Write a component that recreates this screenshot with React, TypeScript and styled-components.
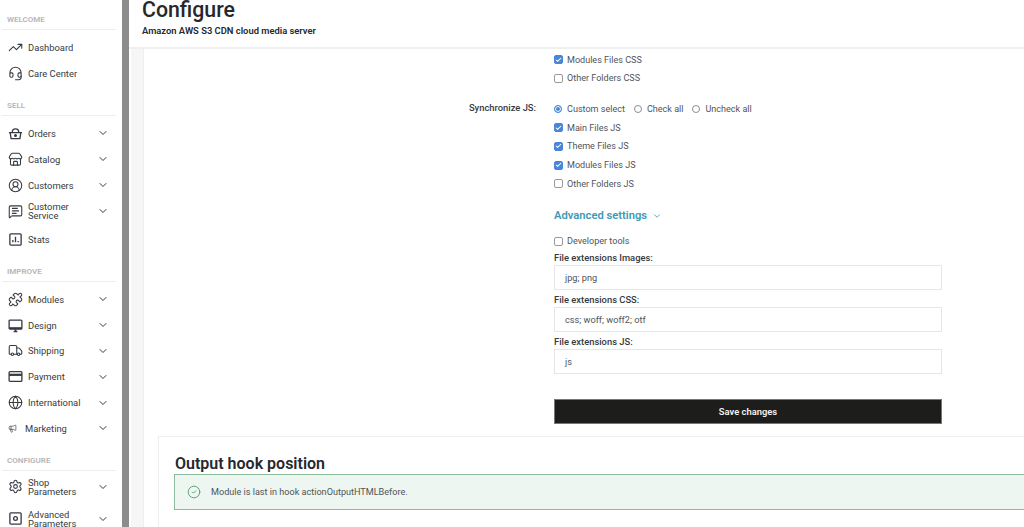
import React from 'react'
import styled, { createGlobalStyle } from 'styled-components'
import {
  TrendingUp, Headset, Store, CircleUserRound, MessageSquareText,
  Puzzle, Truck, Globe, Megaphone, Settings, ChevronDown, CircleCheck, Check,
} from 'lucide-react'

const FONT = `Roboto, "Liberation Sans", sans-serif`

const GlobalStyle = createGlobalStyle`
  html, body {
    margin: 0;
    height: 527px;
    overflow: hidden;
    background: #fff;
    font-family: ${FONT};
    color: #363a41;
  }
`

const Page = styled.div`
  display: flex;
  width: 1024px;
  height: 527px;
  overflow: hidden;
`

const Sidebar = styled.nav`
  flex: 0 0 122px;
  box-sizing: border-box;
  padding: 13px 6px 0 2px;
  overflow: hidden;
`

const SectionTitle = styled.div<{ $gap: number }>`
  margin-top: ${p => p.$gap}px;
  height: 16px;
  padding-left: 5px;
  line-height: 13px;
  font-size: 8px;
  font-weight: 600;
  color: #b4b6b8;
  border-bottom: 1px solid #eeeeee;
`

const NavList = styled.div<{ $pad: number }>`
  display: flex;
  flex-direction: column;
  padding-top: ${p => p.$pad}px;
`

const NavRow = styled.div<{ $height: number }>`
  display: flex;
  align-items: center;
  height: ${p => p.$height}px;
  padding-left: 6px;
  color: #363a41;
  svg { flex: none; }
`

const NavLabel = styled.span<{ $small?: boolean }>`
  flex: 1;
  margin-left: ${p => (p.$small ? 8 : 5)}px;
  font-size: 9.4px;
  line-height: 9px;
`

const Chevron = styled(ChevronDown)`
  margin-right: 7px;
`

const Divider = styled.div`
  flex: 0 0 7px;
  background: #8c8c8c;
`

const Main = styled.main`
  flex: 1;
  min-width: 0;
  display: flex;
  flex-direction: column;
`

const Header = styled.header`
  flex: 0 0 49px;
  box-sizing: border-box;
  padding-left: 13px;
  border-bottom: 2px solid #efefef;
`

const Title = styled.h1`
  margin: 0;
  font-size: 21.3px;
  line-height: 20px;
  font-weight: 500;
  color: #25282c;
`

const Subtitle = styled.div`
  margin-top: 5px;
  font-size: 9.4px;
  line-height: 12px;
  font-weight: 600;
  color: #25282c;
`

const Body = styled.div`
  flex: 1;
  display: flex;
  min-height: 0;
  padding-left: 2px;
`

const Gutter = styled.div`
  flex: 0 0 12px;
  background: #f6f6f6;
`

const Panel = styled.section`
  flex: 1;
  min-width: 0;
  border-left: 1px solid #eeeeee;
  padding-top: 1.4px;
`

const FormRow = styled.div<{ $gap?: number }>`
  display: grid;
  grid-template-columns: 392px 388px;
  column-gap: 18px;
  margin-top: ${p => p.$gap ?? 0}px;
`

const RowLabel = styled.div`
  text-align: right;
  font-size: 9.4px;
  line-height: 15px;
  font-weight: 500;
  color: #363a41;
`

const Controls = styled.div`
  display: flex;
  flex-direction: column;
`

const Option = styled.label`
  display: flex;
  align-items: center;
  height: 18.7px;
  font-size: 9.05px;
  color: #50545a;
`

const Box = styled.span<{ $on?: boolean }>`
  display: flex;
  align-items: center;
  justify-content: center;
  box-sizing: border-box;
  width: 9px;
  height: 9px;
  margin-right: 4px;
  border-radius: 2px;
  border: 1px solid ${p => (p.$on ? '#4a86d8' : '#9a9a9a')};
  background: ${p => (p.$on ? '#4a86d8' : '#fff')};
  color: #fff;
`

const RadioRow = styled.div`
  display: flex;
  align-items: center;
  height: 18.7px;
  gap: 9px;
`

const RadioItem = styled.label`
  display: flex;
  align-items: center;
  font-size: 9.05px;
  color: #50545a;
`

const Radio = styled.span<{ $on?: boolean }>`
  box-sizing: border-box;
  width: 8px;
  height: 8px;
  margin-right: 5px;
  border-radius: 50%;
  border: 1px solid ${p => (p.$on ? '#4a86d8' : '#8d8d8d')};
  background: ${p => (p.$on ? '#4a86d8' : '#fff')};
  box-shadow: ${p => (p.$on ? 'inset 0 0 0 1px #fff' : 'none')};
`

const AdvancedLink = styled.div`
  display: flex;
  align-items: center;
  gap: 5px;
  margin: 14.6px 0 8px;
  height: 16px;
  font-size: 11.2px;
  font-weight: 600;
  color: #3d9ab5;
`

const FieldLabel = styled.div<{ $gap?: number }>`
  font-size: 9.4px;
  line-height: 12px;
  font-weight: 500;
  color: #363a41;
  margin-top: ${p => p.$gap ?? 0}px;
`

const TextField = styled.div`
  box-sizing: border-box;
  height: 25px;
  margin: 1px 0 4px;
  padding-left: 10px;
  border: 1px solid #e6e6e6;
  font-size: 9.2px;
  line-height: 23px;
  color: #50545a;
`

const SaveButton = styled.button`
  box-sizing: border-box;
  width: 100%;
  height: 25px;
  margin-top: 21px;
  border: 1px solid #777;
  background: #1d1d1b;
  color: #f2f2f2;
  font-family: ${FONT};
  font-size: 9.4px;
  font-weight: 600;
`

const Card = styled.section`
  margin: 12px 0 0 14px;
  padding: 16px 0 0 15px;
  border: 1px solid #eeeeee;
  border-right: 0;
  height: 200px;
`

const CardTitle = styled.h2`
  margin: 0;
  padding-left: 1px;
  font-size: 16px;
  line-height: 21px;
  font-weight: 600;
  color: #25282c;
`

const Alert = styled.div`
  box-sizing: border-box;
  display: flex;
  align-items: center;
  gap: 10px;
  height: 36px;
  padding-left: 12px;
  background: #edf6f0;
  border: 1px solid #8bbd9c;
  border-right: 0;
  font-size: 9.1px;
  color: #50545a;
  svg { color: #4f9b6b; flex: none; }
`

type IconProps = { size?: number; strokeWidth?: number }

// icons lucide has no close match for
const BasketIcon = ({ size = 15 }: IconProps) => (
  <svg width={size} height={size} viewBox="0 0 16 16" fill="none" stroke="currentColor" strokeWidth="1.4">
    <path d="M1 7h14M2.3 7l1 6.5h9.4l1-6.5" />
    <path d="M4.5 7c0-2.5 1.5-4 3.5-4s3.5 1.5 3.5 4" />
    <circle cx="8" cy="10.2" r="0.9" fill="currentColor" />
  </svg>
)

const StatsIcon = ({ size = 15 }: IconProps) => (
  <svg width={size} height={size} viewBox="0 0 16 16" fill="none" stroke="currentColor" strokeWidth="1.4">
    <rect x="2" y="2" width="12" height="12" rx="1" />
    <path d="M5.2 11V8.5M8 11V5M10.8 11V9.5" />
  </svg>
)

const ScreenIcon = ({ size = 15 }: IconProps) => (
  <svg width={size} height={size} viewBox="0 0 16 16" fill="none" stroke="currentColor" strokeWidth="1.4">
    <rect x="1.2" y="2.2" width="13.6" height="9.6" rx="1" />
    <path d="M1.2 10.8h13.6" strokeWidth="2" />
    <path d="M8 12v2.5M6 14.5h4" strokeWidth="1.6" />
  </svg>
)

const CardIcon = ({ size = 15 }: IconProps) => (
  <svg width={size} height={size} viewBox="0 0 16 16" fill="none" stroke="currentColor" strokeWidth="1.4">
    <rect x="1.2" y="2.8" width="13.6" height="10.4" rx="1" />
    <path d="M1.2 6.2h13.6" strokeWidth="2.4" />
  </svg>
)

const ChipIcon = ({ size = 15 }: IconProps) => (
  <svg width={size} height={size} viewBox="0 0 16 16" fill="none" stroke="currentColor" strokeWidth="1.4">
    <rect x="2" y="2" width="12" height="12" rx="1" />
    <circle cx="8" cy="8" r="2" />
  </svg>
)

const NAV = [
  {
    title: 'WELCOME', gap: 0, pad: 4, items: [
      { label: 'Dashboard', icon: TrendingUp, h: 26 },
      { label: 'Care Center', icon: Headset, h: 26 },
    ],
  },
  {
    title: 'SELL', gap: 13, pad: 4, items: [
      { label: 'Orders', icon: BasketIcon, h: 26, more: true },
      { label: 'Catalog', icon: Store, h: 26, more: true },
      { label: 'Customers', icon: CircleUserRound, h: 26, more: true },
      { label: 'Customer Service', icon: MessageSquareText, h: 26, more: true },
      { label: 'Stats', icon: StatsIcon, h: 30 },
    ],
  },
  {
    title: 'IMPROVE', gap: 10.5, pad: 5, items: [
      { label: 'Modules', icon: Puzzle, h: 25.8, more: true },
      { label: 'Design', icon: ScreenIcon, h: 25.8, more: true },
      { label: 'Shipping', icon: Truck, h: 25.8, more: true },
      { label: 'Payment', icon: CardIcon, h: 25.8, more: true },
      { label: 'International', icon: Globe, h: 25.8, more: true },
      { label: 'Marketing', icon: Megaphone, h: 25.8, more: true, small: true },
    ],
  },
  {
    title: 'CONFIGURE', gap: 12.6, pad: 1, items: [
      { label: 'Shop Parameters', icon: Settings, h: 30, more: true },
      { label: 'Advanced Parameters', icon: ChipIcon, h: 34, more: true },
    ],
  },
]

const CheckOption = ({ label, on }: { label: string; on?: boolean }) => (
  <Option>
    <Box $on={on}>{on && <Check size={8} strokeWidth={3.5} />}</Box>
    {label}
  </Option>
)

export default function App() {
  return (
    <Page>
      <GlobalStyle />
      <Sidebar>
        {NAV.map(section => (
          <div key={section.title}>
            <SectionTitle $gap={section.gap}>{section.title}</SectionTitle>
            <NavList $pad={section.pad}>
              {section.items.map((item: any) => {
                const Icon = item.icon
                return (
                  <NavRow key={item.label} $height={item.h}>
                    <Icon size={item.small ? 9 : 15} strokeWidth={1.7} />
                    <NavLabel $small={item.small}>{item.label}</NavLabel>
                    {item.more && <Chevron size={12} strokeWidth={2} />}
                  </NavRow>
                )
              })}
            </NavList>
          </div>
        ))}
      </Sidebar>
      <Divider />
      <Main>
        <Header>
          <Title>Configure</Title>
          <Subtitle>Amazon AWS S3 CDN cloud media server</Subtitle>
        </Header>
        <Body>
          <Gutter />
          <Panel>
            <FormRow>
              <div />
              <Controls>
                <CheckOption label="Modules Files CSS" on />
                <CheckOption label="Other Folders CSS" />
              </Controls>
            </FormRow>
            <FormRow $gap={12}>
              <RowLabel>Synchronize JS:</RowLabel>
              <Controls>
                <RadioRow>
                  <RadioItem><Radio $on />Custom select</RadioItem>
                  <RadioItem><Radio />Check all</RadioItem>
                  <RadioItem><Radio />Uncheck all</RadioItem>
                </RadioRow>
                <CheckOption label="Main Files JS" on />
                <CheckOption label="Theme Files JS" on />
                <CheckOption label="Modules Files JS" on />
                <CheckOption label="Other Folders JS" />
                <AdvancedLink>
                  Advanced settings
                  <ChevronDown size={10} strokeWidth={2} />
                </AdvancedLink>
                <CheckOption label="Developer tools" />
                <FieldLabel $gap={1.4}>File extensions Images:</FieldLabel>
                <TextField>jpg; png</TextField>
                <FieldLabel>File extensions CSS:</FieldLabel>
                <TextField>css; woff; woff2; otf</TextField>
                <FieldLabel>File extensions JS:</FieldLabel>
                <TextField>js</TextField>
                <SaveButton>Save changes</SaveButton>
              </Controls>
            </FormRow>
            <Card>
              <CardTitle>Output hook position</CardTitle>
              <Alert>
                <CircleCheck size={14} strokeWidth={1.5} />
                Module is last in hook actionOutputHTMLBefore.
              </Alert>
            </Card>
          </Panel>
        </Body>
      </Main>
    </Page>
  )
}
